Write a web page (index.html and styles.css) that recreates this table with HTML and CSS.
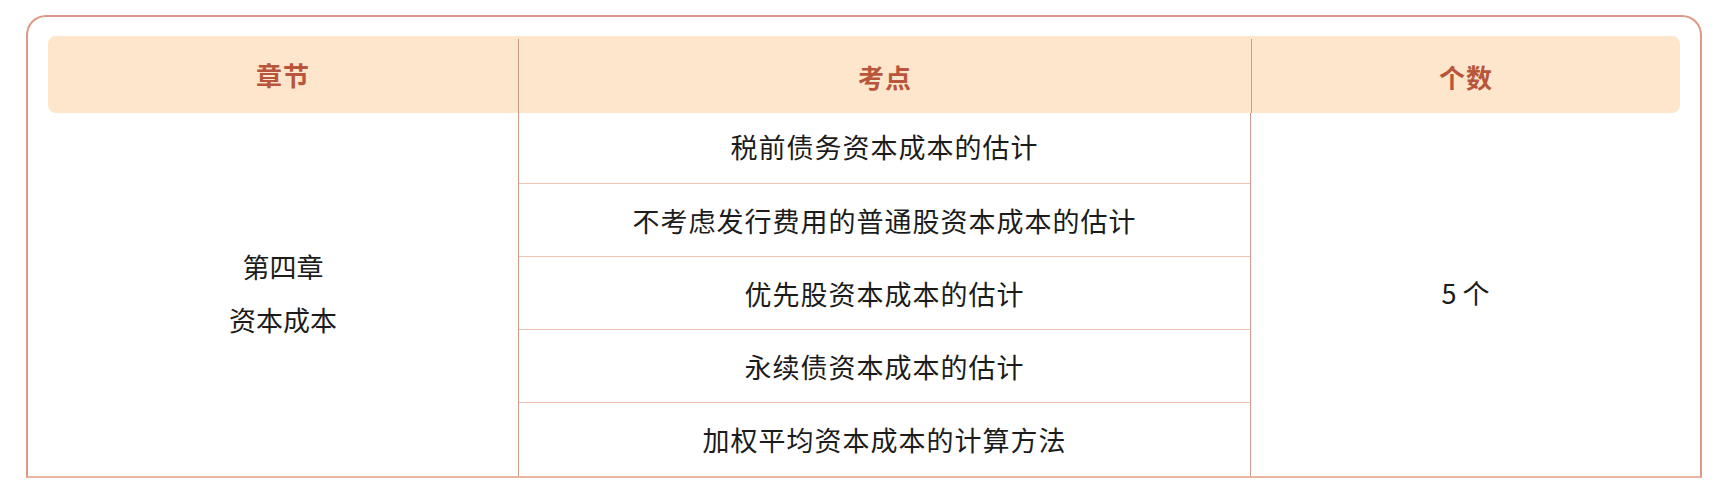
FILE: index.html
```html
<!DOCTYPE html>
<html lang="zh">
<head>
<meta charset="utf-8">
<link rel="stylesheet" href="styles.css">
</head>
<body>
<div class="card">
  <div class="head">
    <div class="hcell">章节</div>
    <div class="hcell div">考点</div>
    <div class="hcell div">个数</div>
  </div>
  <div class="body">
    <div class="col chapter">
      <div>第四章</div>
      <div>资本成本</div>
    </div>
    <div class="col points">
      <div class="row first">税前债务资本成本的估计</div>
      <div class="row">不考虑发行费用的普通股资本成本的估计</div>
      <div class="row">优先股资本成本的估计</div>
      <div class="row">永续债资本成本的估计</div>
      <div class="row">加权平均资本成本的计算方法</div>
    </div>
    <div class="col count">5 个</div>
  </div>
</div>
</body>
</html>
```

FILE: styles.css
```css
html, body {
  margin: 0;
  padding: 0;
  background: #ffffff;
}
body {
  font-family: "Noto Sans CJK SC", "Noto Sans", sans-serif;
  color: #1c1c1c;
}
.card {
  margin: 15px 0 0 26px;
  width: 1632px;
  padding: 19px 20px 0 20px;
  border: 2px solid #dc9a84;
  border-bottom: 2px solid #eab3a2;
  border-radius: 20px 20px 0 0;
}
.head {
  display: grid;
  grid-template-columns: 470px 733px 429px;
  height: 77px;
  background: #fde6cc;
  border-radius: 8px;
}
.hcell {
  display: flex;
  align-items: center;
  justify-content: center;
  font-size: 26px;
  font-weight: 700;
  color: #b8553b;
  letter-spacing: 1px;
}
.hcell.div {
  border-left: 1.5px solid #d29a86;
  margin-top: 3px;
}
.body {
  display: grid;
  grid-template-columns: 470px 733px 429px;
  font-size: 27px;
}
.col {
  display: flex;
  flex-direction: column;
  justify-content: center;
  align-items: center;
}
.chapter {
  line-height: 53px;
  padding-bottom: 4px;
}
.points {
  border-left: 1.5px solid #d29a86;
  border-right: 1.5px solid #d29a86;
}
.row {
  height: 73px;
  width: 100%;
  display: flex;
  align-items: center;
  justify-content: center;
  border-bottom: 1.5px solid #efc3b5;
  box-sizing: border-box;
  letter-spacing: 1px;
}
.row.first {
  height: 71px;
  padding-bottom: 4px;
}
.row:last-child {
  border-bottom: none;
}
.count {
  font-size: 27px;
  padding-bottom: 4px;
}
```
